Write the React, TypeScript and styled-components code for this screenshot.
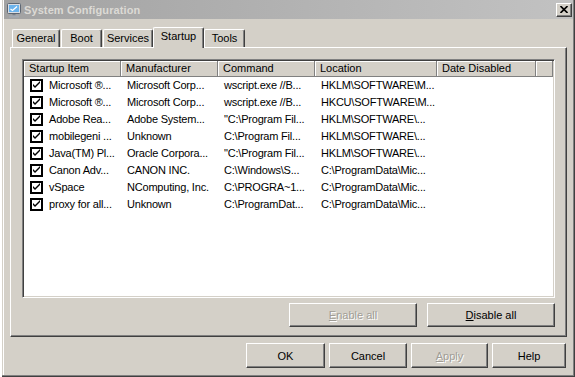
import React from "react"
import styled, { createGlobalStyle } from "styled-components"

const Face = "#d4d0c8"
const Shadow = "#808080"
const DarkShadow = "#404040"
const uiFont = `"Liberation Sans", Arial, sans-serif`

const GlobalStyle = createGlobalStyle`
  html, body {
    margin: 0;
    padding: 0;
    background: #ffffff;
  }
  body {
    font-family: ${uiFont};
    font-size: 11px;
    color: #000;
  }
`

type Row = {
  item: string
  maker: string
  command: string
  location: string
}

const rows: Row[] = [
  { item: "Microsoft ®...", maker: "Microsoft Corp...", command: "wscript.exe //B...", location: "HKLM\\SOFTWARE\\M..." },
  { item: "Microsoft ®...", maker: "Microsoft Corp...", command: "wscript.exe //B...", location: "HKCU\\SOFTWARE\\M..." },
  { item: "Adobe Rea...", maker: "Adobe System...", command: "\"C:\\Program Fil...", location: "HKLM\\SOFTWARE\\..." },
  { item: "mobilegeni ...", maker: "Unknown", command: "C:\\Program Fil...", location: "HKLM\\SOFTWARE\\..." },
  { item: "Java(TM) Pl...", maker: "Oracle Corpora...", command: "\"C:\\Program Fil...", location: "HKLM\\SOFTWARE\\..." },
  { item: "Canon Adv...", maker: "CANON INC.", command: "C:\\Windows\\S...", location: "C:\\ProgramData\\Mic..." },
  { item: "vSpace", maker: "NComputing, Inc.", command: "C:\\PROGRA~1...", location: "C:\\ProgramData\\Mic..." },
  { item: "proxy for all...", maker: "Unknown", command: "C:\\ProgramDat...", location: "C:\\ProgramData\\Mic..." },
]

const tabs = [
  { label: "General", width: 48, gap: 1 },
  { label: "Boot", width: 41, gap: 1 },
  { label: "Services", width: 50, gap: 0 },
  { label: "Startup", width: 51, gap: 0, active: true },
  { label: "Tools", width: 41, gap: 0 },
]

const columns = "97px 97px 97px 122px 99px 1fr"

const Root = styled.div`
  display: flex;
  padding-left: 2px;
  height: 377px;
  background: #fff;
`

const Window = styled.div`
  box-sizing: border-box;
  width: 573px;
  height: 377px;
  display: flex;
  flex-direction: column;
  padding: 0 2px 2px 2px;
  background: ${Face};
  box-shadow: inset -1px -1px ${DarkShadow}, inset -2px -2px ${Shadow},
    inset 1px 0 ${Face}, inset 2px 0 #fff;
`

const TitleBar = styled.div`
  height: 19px;
  display: flex;
  align-items: center;
  padding-left: 2px;
  background: linear-gradient(to right, #a2a2a2, #c2c2c2);
`

const TitleIcon = styled.svg`
  width: 16px;
  height: 16px;
  margin-right: 2px;
  flex: none;
`

const TitleText = styled.span`
  font-weight: bold;
  font-size: 11px;
  color: #dcdad5;
  letter-spacing: 0.1px;
`

const CloseButton = styled.div`
  box-sizing: border-box;
  margin-left: auto;
  margin-right: 1px;
  width: 16px;
  height: 14px;
  display: flex;
  align-items: center;
  justify-content: center;
  background: ${Face};
  border: 1px solid;
  border-color: #fff ${DarkShadow} ${DarkShadow} #fff;
  box-shadow: inset -1px -1px ${Shadow};
`

const Body = styled.div`
  display: flex;
  flex-direction: column;
  padding: 8px 6px 0 6px;
`

const TabStrip = styled.div`
  display: flex;
  align-items: flex-end;
  height: 20px;
  padding-left: 2px;
  position: relative;
  z-index: 1;
`

const Tab = styled.div<{ $width: number; $gap: number; $active?: boolean }>`
  box-sizing: border-box;
  width: ${p => p.$width}px;
  margin-right: ${p => p.$gap}px;
  height: ${p => (p.$active ? 21 : 18)}px;
  margin-bottom: ${p => (p.$active ? -1 : 0)}px;
  padding-top: 2px;
  text-align: center;
  background: ${Face};
  border-top: 1px solid #fff;
  border-left: 1px solid #fff;
  border-right: 1px solid ${DarkShadow};
  border-radius: 2px 2px 0 0;
  box-shadow: inset -1px 0 ${Shadow};
  font-size: 11px;
  line-height: 13px;
`

const Panel = styled.div`
  box-sizing: border-box;
  height: 290px;
  display: flex;
  flex-direction: column;
  padding: 11px 11px 9px 11px;
  border-top: 1px solid #fff;
  border-left: 1px solid #fff;
  border-right: 1px solid ${DarkShadow};
  border-bottom: 1px solid ${DarkShadow};
  box-shadow: inset -1px -1px ${Shadow};
`

const ListBox = styled.div`
  box-sizing: border-box;
  height: 239px;
  background: #fff;
  border: 1px solid;
  border-color: ${Shadow} #fff #fff ${Shadow};
  box-shadow: inset 1px 1px ${DarkShadow}, inset -1px -1px ${Face};
  padding: 1px;
  overflow: hidden;
`

const HeaderRow = styled.div`
  display: grid;
  grid-template-columns: ${columns};
  height: 16px;
`

const HeaderCell = styled.div`
  box-sizing: border-box;
  background: ${Face};
  border-right: 1px solid ${Shadow};
  border-bottom: 1px solid ${Shadow};
  box-shadow: inset 1px 1px #fff;
  padding-left: 5px;
  line-height: 15px;
  white-space: nowrap;
  overflow: hidden;
`

const ItemRow = styled.div`
  display: grid;
  grid-template-columns: ${columns};
  height: 17px;
  align-items: center;
`

const Cell = styled.div`
  display: flex;
  align-items: center;
  padding-left: 6px;
  white-space: nowrap;
  overflow: hidden;
  line-height: 17px;
  letter-spacing: -0.2px;
`

const CheckBox = styled.svg`
  width: 13px;
  height: 13px;
  flex: none;
  margin-right: 6px;
`

const ButtonRow = styled.div`
  display: flex;
  justify-content: flex-end;
  gap: 10px;
  margin-top: 5px;
`

const Button = styled.div<{ $width: number; $height: number; $disabled?: boolean }>`
  box-sizing: border-box;
  width: ${p => p.$width}px;
  height: ${p => p.$height}px;
  display: flex;
  align-items: center;
  justify-content: center;
  background: ${Face};
  border: 1px solid;
  border-color: #fff ${DarkShadow} ${DarkShadow} #fff;
  box-shadow: inset -1px -1px ${Shadow};
  font-size: 11px;
  color: ${p => (p.$disabled ? "#a09d96" : "#000")};
  text-shadow: ${p => (p.$disabled ? "1px 1px #fff" : "none")};

  u {
    text-decoration: underline;
    text-underline-offset: 1px;
  }
`

const Footer = styled.div`
  display: flex;
  justify-content: flex-end;
  gap: 4px;
  margin-top: 6px;
  padding-right: 1px;
`

function Check() {
  return (
    <CheckBox viewBox="0 0 13 13">
      <rect x="0.5" y="0.5" width="12" height="12" fill="#fff" stroke="#000" />
      <rect x="1.5" y="1.5" width="10" height="10" fill="none" stroke="#000" />
      <path d="M3 5 L3 7 L5 9 L10 4 L10 2 L5 7 Z" fill="#000" />
    </CheckBox>
  )
}

function MsConfigIcon() {
  return (
    <TitleIcon viewBox="0 0 16 16">
      <rect x="1.5" y="1.5" width="13" height="10" rx="1" fill="#d9dde3" stroke="#5d6673" />
      <rect x="3" y="3" width="10" height="7" fill="#6bb3ec" />
      <path d="M4.5 7 L6.5 8.5 L11 4.5" stroke="#fff" strokeWidth="1.3" fill="none" />
      <rect x="6.5" y="12" width="3" height="1.5" fill="#7a828c" />
      <rect x="3" y="13.5" width="10" height="2" rx="0.5" fill="#a3aab3" />
    </TitleIcon>
  )
}

export default function App() {
  return (
    <>
      <GlobalStyle />
      <Root>
        <Window>
          <TitleBar>
            <MsConfigIcon />
            <TitleText>System Configuration</TitleText>
            <CloseButton>
              <svg width="8" height="7" viewBox="0 0 8 7">
                <path d="M0.5 0 L7.5 7 M7.5 0 L0.5 7" stroke="#000" strokeWidth="1.6" />
              </svg>
            </CloseButton>
          </TitleBar>
          <Body>
            <TabStrip>
              {tabs.map(t => (
                <Tab key={t.label} $width={t.width} $gap={t.gap} $active={t.active}>
                  {t.label}
                </Tab>
              ))}
            </TabStrip>
            <Panel>
              <ListBox>
                <HeaderRow>
                  <HeaderCell>Startup Item</HeaderCell>
                  <HeaderCell>Manufacturer</HeaderCell>
                  <HeaderCell>Command</HeaderCell>
                  <HeaderCell>Location</HeaderCell>
                  <HeaderCell>Date Disabled</HeaderCell>
                  <HeaderCell />
                </HeaderRow>
                {rows.map((r, i) => (
                  <ItemRow key={i}>
                    <Cell>
                      <Check />
                      {r.item}
                    </Cell>
                    <Cell>{r.maker}</Cell>
                    <Cell>{r.command}</Cell>
                    <Cell>{r.location}</Cell>
                    <Cell />
                    <Cell />
                  </ItemRow>
                ))}
              </ListBox>
              <ButtonRow>
                <Button $width={128} $height={24} $disabled>
                  <span><u>E</u>nable all</span>
                </Button>
                <Button $width={128} $height={24}>
                  <span><u>D</u>isable all</span>
                </Button>
              </ButtonRow>
            </Panel>
            <Footer>
              <Button $width={79} $height={25}>OK</Button>
              <Button $width={78} $height={25}>Cancel</Button>
              <Button $width={77} $height={25} $disabled>
                <span><u>A</u>pply</span>
              </Button>
              <Button $width={74} $height={25}>Help</Button>
            </Footer>
          </Body>
        </Window>
      </Root>
    </>
  )
}
